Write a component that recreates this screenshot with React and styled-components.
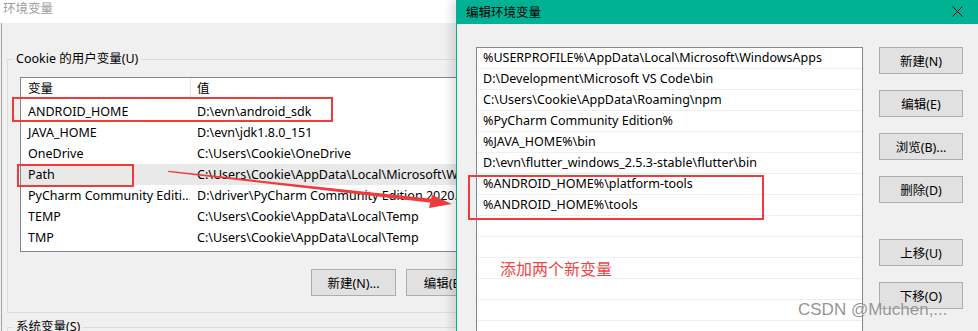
import React from "react";
import styled, { createGlobalStyle } from "styled-components";

const Global = createGlobalStyle`
  html, body { margin: 0; padding: 0; overflow: hidden; }
  body { font-family: "Noto Sans", "Noto Sans CJK SC", sans-serif; font-size: 12.5px; color: #000; }
`;

const Desktop = styled.div`
  position: relative;
  width: 978px;
  height: 331px;
  display: flex;
  overflow: hidden;
  background: #f0f0f0;
`;

const BackWindow = styled.div`
  flex: none;
  width: 456px;
  overflow: hidden;
  display: flex;
  flex-direction: column;
`;

const BackTitle = styled.div`
  flex: none;
  height: 23px;
  width: 620px;
  background: #fff;
  color: #9d9d9d;
  padding-left: 3px;
  line-height: 17px;
  font-size: 12.5px;
`;

const BackBody = styled.div`
  flex: 1;
  width: 620px;
  margin-left: 1px;
  border-left: 1px solid #a3a3a3;
  background: #f0f0f0;
`;

const GroupBox = styled.fieldset`
  margin: ${(p) => p.$top}px 0 0 5px;
  padding: 10px 12px 16px 12px;
  border: 1px solid #dcdcdc;
  width: 566px;
  box-sizing: content-box;
  min-inline-size: 0;
`;

const GroupLabel = styled.legend`
  margin-left: -7px;
  padding: 0 3px;
  line-height: 16px;
  font-size: 12.5px;
`;

const VarList = styled.div`
  height: 175px;
  box-sizing: border-box;
  border: 1px solid #828790;
  background: #fff;
  overflow: hidden;
`;

const HeadRow = styled.div`
  display: grid;
  grid-template-columns: 169px 1fr;
  height: 23px;
  line-height: 22px;
`;

const HeadCell = styled.div`
  padding-left: ${(p) => (p.$divider ? 6 : 7)}px;
  border-left: ${(p) => (p.$divider ? "1px solid #e5e5e5" : "none")};
`;

const VarRow = styled.div`
  display: grid;
  grid-template-columns: 169px 1fr;
  height: 21px;
  line-height: 21px;
  background: ${(p) => (p.$selected ? "#e9e9e9" : "transparent")};
`;

const Cell = styled.div`
  padding-left: 7px;
  white-space: nowrap;
  overflow: hidden;
`;

const ButtonRow = styled.div`
  display: flex;
  justify-content: flex-end;
  gap: 10px;
  margin-top: 17px;
`;

const Button = styled.div`
  box-sizing: border-box;
  width: ${(p) => p.$w}px;
  height: 27px;
  margin-top: ${(p) => p.$gapBefore || 0}px;
  background: #e1e1e1;
  border: 1px solid #adadad;
  display: flex;
  align-items: center;
  justify-content: center;
  font-size: 12.5px;
  white-space: nowrap;
`;

const FrontWindow = styled.div`
  flex: 1;
  display: flex;
  flex-direction: column;
  border-left: 1px solid #11a88c;
  box-shadow: -5px 0 8px rgba(0, 0, 0, 0.12);
  z-index: 1;
  background: #f0f0f0;
`;

const FrontTitle = styled.div`
  flex: none;
  height: 24px;
  background: #00b294;
  display: flex;
  align-items: center;
  justify-content: space-between;
  padding: 0 15px 2px 9px;
  box-sizing: border-box;
  font-size: 12.5px;
  color: #000;
`;

const FrontBody = styled.div`
  flex: 1;
  display: flex;
  gap: 16px;
  padding: 23px 15px 0 19px;
`;

const PathList = styled.div`
  flex: none;
  width: 387px;
  box-sizing: border-box;
  border: 1px solid #828790;
  border-bottom: none;
  background: #fff;
  overflow: hidden;
`;

const PathRow = styled.div`
  height: 21px;
  box-sizing: border-box;
  border-bottom: 1px solid #efefef;
  padding-left: 6px;
  line-height: 20px;
  white-space: nowrap;
`;

const ButtonColumn = styled.div`
  flex: none;
  display: flex;
  flex-direction: column;
  gap: 16px;
`;

const Overlay = styled.svg`
  position: absolute;
  left: 0;
  top: 0;
  z-index: 5;
  pointer-events: none;
`;

const RedBox = styled.div`
  position: absolute;
  z-index: 5;
  box-sizing: border-box;
  border: 2px solid #ef3b3b;
  pointer-events: none;
`;

const RedNote = styled.div`
  position: absolute;
  z-index: 5;
  left: 500px;
  top: 258px;
  color: #f04444;
  font-size: 16px;
  line-height: 20px;
  font-family: "Noto Sans CJK SC", sans-serif;
`;

const Watermark = styled.div`
  position: absolute;
  z-index: 6;
  left: 798px;
  top: 300px;
  font-family: "Liberation Sans", Arial, sans-serif;
  font-size: 17px;
  line-height: 20px;
  color: rgba(120, 120, 120, 0.8);
  text-shadow: 0 0 1px rgba(255, 255, 255, 0.9);
  white-space: nowrap;
`;

const vars = [
  ["ANDROID_HOME", "D:\\evn\\android_sdk"],
  ["JAVA_HOME", "D:\\evn\\jdk1.8.0_151"],
  ["OneDrive", "C:\\Users\\Cookie\\OneDrive"],
  ["Path", "C:\\Users\\Cookie\\AppData\\Local\\Microsoft\\WindowsApps;", true],
  ["PyCharm Community Editi...", "D:\\driver\\PyCharm Community Edition 2020.3.3\\bin;"],
  ["TEMP", "C:\\Users\\Cookie\\AppData\\Local\\Temp"],
  ["TMP", "C:\\Users\\Cookie\\AppData\\Local\\Temp"],
];

const paths = [
  "%USERPROFILE%\\AppData\\Local\\Microsoft\\WindowsApps",
  "D:\\Development\\Microsoft VS Code\\bin",
  "C:\\Users\\Cookie\\AppData\\Roaming\\npm",
  "%PyCharm Community Edition%",
  "%JAVA_HOME%\\bin",
  "D:\\evn\\flutter_windows_2.5.3-stable\\flutter\\bin",
  "%ANDROID_HOME%\\platform-tools",
  "%ANDROID_HOME%\\tools",
  "", "", "", "", "",
];

const CloseIcon = () => (
  <svg width="11" height="11" viewBox="0 0 11 11">
    <path d="M0.5 0.5 L10.5 10.5 M10.5 0.5 L0.5 10.5" stroke="#111" strokeWidth="1" fill="none" />
  </svg>
);

export default function App() {
  return (
    <>
      <Global />
      <Desktop>
        <BackWindow>
          <BackTitle>环境变量</BackTitle>
          <BackBody>
            <GroupBox $top={28}>
              <GroupLabel>Cookie 的用户变量(U)</GroupLabel>
              <VarList>
                <HeadRow>
                  <HeadCell>变量</HeadCell>
                  <HeadCell $divider>值</HeadCell>
                </HeadRow>
                {vars.map(([k, v, sel]) => (
                  <VarRow key={k} $selected={sel}>
                    <Cell>{k}</Cell>
                    <Cell>{v}</Cell>
                  </VarRow>
                ))}
              </VarList>
              <ButtonRow>
                <Button $w={85}>新建(N)...</Button>
                <Button $w={85}>编辑(E)...</Button>
                <Button $w={85}>删除(D)</Button>
              </ButtonRow>
            </GroupBox>
            <GroupBox $top={6}>
              <GroupLabel>系统变量(S)</GroupLabel>
            </GroupBox>
          </BackBody>
        </BackWindow>
        <FrontWindow>
          <FrontTitle>
            <span>编辑环境变量</span>
            <CloseIcon />
          </FrontTitle>
          <FrontBody>
            <PathList>
              {paths.map((p, i) => (
                <PathRow key={i}>{p}</PathRow>
              ))}
            </PathList>
            <ButtonColumn>
              <Button $w={84}>新建(N)</Button>
              <Button $w={84}>编辑(E)</Button>
              <Button $w={84}>浏览(B)...</Button>
              <Button $w={84}>删除(D)</Button>
              <Button $w={84} $gapBefore={20}>上移(U)</Button>
              <Button $w={84}>下移(O)</Button>
            </ButtonColumn>
          </FrontBody>
        </FrontWindow>

        <RedBox style={{ left: 12, top: 97, width: 321, height: 25 }} />
        <RedBox style={{ left: 17, top: 164, width: 117, height: 23 }} />
        <RedBox style={{ left: 468, top: 175, width: 296, height: 45 }} />
        <Overlay width="978" height="331" viewBox="0 0 978 331">
          <polygon points="168,172 168.3,170.8 436,199.2 435.4,203.2" fill="#ef3b3b" />
          <polygon points="452,204 432,195 429,208" fill="#ef3b3b" />
        </Overlay>
        <RedNote>添加两个新变量</RedNote>
        <Watermark>CSDN @Muchen,...</Watermark>
      </Desktop>
    </>
  );
}
